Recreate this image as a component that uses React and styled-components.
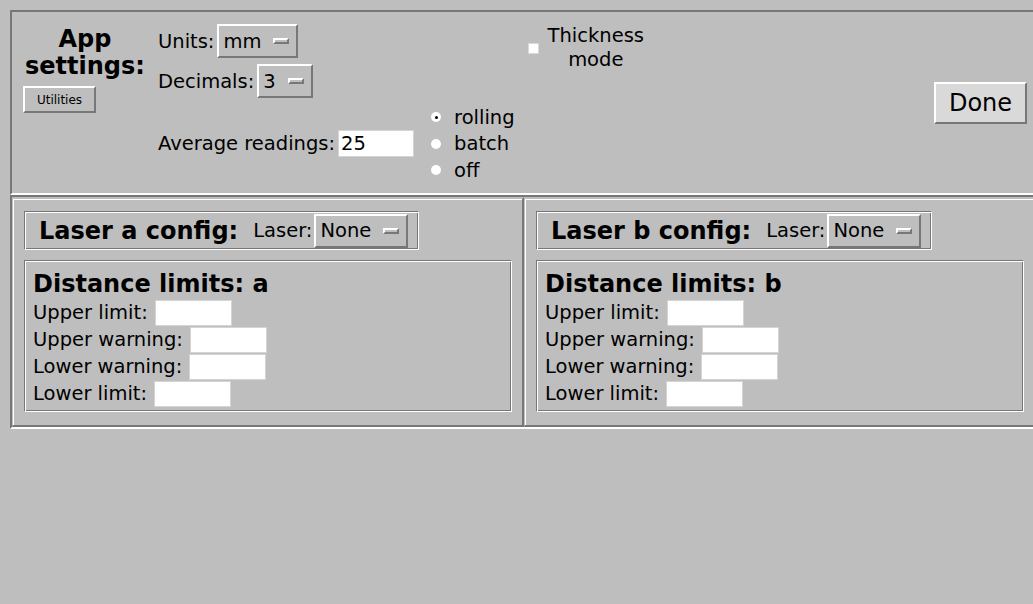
import React from "react";
import styled, { createGlobalStyle, css } from "styled-components";

const C = {
  bg: "#bebebe",
  dark: "#777777",
  light: "#ffffff",
  active: "#d9d9d9",
};

const GlobalStyle = createGlobalStyle`
  html, body {
    margin: 0;
    padding: 0;
    overflow: hidden;
    background: ${C.bg};
  }
  body {
    font-family: "DejaVu Sans", "Liberation Sans", sans-serif;
    color: #000;
  }
`;

/* Tk-style 3D reliefs */
const sunken = css`
  border-style: solid;
  border-width: 2px;
  border-color: ${C.dark} ${C.light} ${C.light} ${C.dark};
`;

const raised = css`
  border-style: solid;
  border-width: 2px;
  border-color: ${C.light} ${C.dark} ${C.dark} ${C.light};
`;

const groove = css`
  border: 1px solid;
  border-color: ${C.dark} ${C.light} ${C.light} ${C.dark};
  box-shadow: inset 1px 1px 0 ${C.light}, inset -1px -1px 0 ${C.dark};
`;

const Window = styled.div`
  width: 1033px;
  height: 604px;
  overflow: hidden;
  box-sizing: border-box;
  padding: 10px 0 0 10px;
  background: ${C.bg};
  font-size: 19.5px;
`;

/* ---------- App settings frame ---------- */

const SettingsFrame = styled.div`
  ${sunken};
  box-sizing: border-box;
  width: 1028px;
  height: 185px;
  display: flex;
  align-items: flex-start;
`;

const TitleColumn = styled.div`
  margin-left: 11px;
  width: 124px;
  padding-top: 14px;
  display: flex;
  flex-direction: column;
  align-items: flex-start;
`;

const Heading = styled.div`
  font-weight: bold;
  font-size: 24px;
  line-height: ${(p) => p.$lh || "27px"};
  white-space: nowrap;
`;

const Title = styled(Heading)`
  align-self: stretch;
  text-align: center;
`;

const SmallButton = styled.button`
  ${raised};
  box-sizing: border-box;
  margin-top: 6px;
  width: 73px;
  height: 27px;
  padding: 0;
  background: ${C.bg};
  font-family: inherit;
  font-size: 12px;
  color: #000;
`;

const FieldColumn = styled.div`
  margin-left: 11px;
  padding-top: 12px;
  display: flex;
  flex-direction: column;
  align-items: flex-start;
`;

const FieldRow = styled.div`
  display: flex;
  align-items: center;
  gap: ${(p) => p.$gap || "3px"};
  height: ${(p) => p.$h || "34px"};
  margin-top: ${(p) => p.$mt || "0"};
  white-space: nowrap;
`;

const OptionBox = styled.div`
  ${raised};
  box-sizing: border-box;
  height: 34px;
  display: flex;
  align-items: center;
  padding: 0 7px 0 4px;
  background: ${C.bg};
`;

const OptionMark = styled.span`
  ${raised};
  box-sizing: border-box;
  margin-left: 12px;
  width: 16px;
  height: 6px;
  background: ${C.bg};
`;

const TextEntry = styled.input`
  box-sizing: border-box;
  width: ${(p) => p.$w || "77px"};
  height: ${(p) => p.$h || "26px"};
  margin: 0;
  padding: 0 2px;
  border: 1px solid #d4d4d4;
  background: #fff;
  font-family: inherit;
  font-size: 19.5px;
  color: #000;
  outline: none;
`;

const RadioColumn = styled.div`
  margin-left: 17px;
  padding-top: 92px;
  display: flex;
  flex-direction: column;
`;

const RadioRow = styled.div`
  display: flex;
  align-items: center;
  height: 26.5px;
  white-space: nowrap;
`;

const RadioDot = styled.span`
  position: relative;
  width: 10px;
  height: 10px;
  border-radius: 50%;
  background: #fff;
  margin-right: 13px;
  flex-shrink: 0;

  &::after {
    content: "";
    position: absolute;
    left: 3.5px;
    top: 3.5px;
    width: 3px;
    height: 3px;
    border-radius: 50%;
    background: #000;
    display: ${(p) => (p.$on ? "block" : "none")};
  }
`;

const CheckColumn = styled.div`
  margin-left: 13px;
  padding-top: 12px;
  display: flex;
  align-items: center;
`;

const CheckBox = styled.span`
  box-sizing: border-box;
  width: 11px;
  height: 11px;
  background: #fff;
  border: 1px solid #d8d8d8;
  margin-right: 9px;
`;

const CheckText = styled.div`
  text-align: center;
  line-height: 24px;
`;

const DoneButton = styled.button`
  ${raised};
  box-sizing: border-box;
  margin-left: auto;
  margin-right: 9px;
  align-self: center;
  width: 93px;
  height: 42px;
  padding: 0;
  background: ${C.active};
  font-family: inherit;
  font-size: 24px;
  color: #000;
`;

/* ---------- Laser panels ---------- */

const LaserArea = styled.div`
  ${sunken};
  box-sizing: border-box;
  width: 1028px;
  height: 234px;
  display: flex;
`;

const LaserPanel = styled.div`
  box-sizing: border-box;
  width: 512px;
  height: 230px;
  flex-shrink: 0;
  border-style: solid;
  border-width: 2px 2px 2px 1px;
  border-color: ${C.bg} ${C.dark} ${C.dark} ${C.bg};
  box-shadow: inset 1px 1px 0 ${C.light};
  padding: 12px 10px 0 11px;
  display: flex;
  flex-direction: column;
  align-items: flex-start;
`;

const ConfigBar = styled.div`
  ${groove};
  box-sizing: border-box;
  height: 39px;
  display: flex;
  align-items: center;
  padding: 0 10px 0 14px;
  white-space: nowrap;
`;

const ConfigLabel = styled.span`
  margin-left: 15px;
  margin-right: 2px;
`;

const LimitsBox = styled.div`
  ${groove};
  box-sizing: border-box;
  align-self: stretch;
  margin-top: 10px;
  padding: 8px 8px 4px 8px;
`;

const LimitRow = styled.div`
  display: flex;
  align-items: center;
  gap: 7px;
  height: 27px;
  white-space: nowrap;
`;

function OptionMenu({ value }) {
  return (
    <OptionBox>
      <span>{value}</span>
      <OptionMark />
    </OptionBox>
  );
}

const LIMITS = ["Upper limit:", "Upper warning:", "Lower warning:", "Lower limit:"];

function LaserConfig({ id }) {
  return (
    <LaserPanel>
      <ConfigBar>
        <Heading $lh="28px">Laser {id} config:</Heading>
        <ConfigLabel>Laser:</ConfigLabel>
        <OptionMenu value="None" />
      </ConfigBar>
      <LimitsBox>
        <Heading $lh="30px">Distance limits: {id}</Heading>
        {LIMITS.map((label) => (
          <LimitRow key={label}>
            <span>{label}</span>
            <TextEntry defaultValue="" />
          </LimitRow>
        ))}
      </LimitsBox>
    </LaserPanel>
  );
}

const MODES = [
  { label: "rolling", on: true },
  { label: "batch", on: false },
  { label: "off", on: false },
];

export default function App() {
  return (
    <>
      <GlobalStyle />
      <Window>
        <SettingsFrame>
          <TitleColumn>
            <Title>
              App
              <br />
              settings:
            </Title>
            <SmallButton>Utilities</SmallButton>
          </TitleColumn>

          <FieldColumn>
            <FieldRow>
              <span>Units:</span>
              <OptionMenu value="mm" />
            </FieldRow>
            <FieldRow $mt="6px">
              <span>Decimals:</span>
              <OptionMenu value="3" />
            </FieldRow>
            <FieldRow $mt="32px" $h="27px">
              <span>Average readings:</span>
              <TextEntry $w="76px" $h="27px" defaultValue="25" />
            </FieldRow>
          </FieldColumn>

          <RadioColumn>
            {MODES.map((m) => (
              <RadioRow key={m.label}>
                <RadioDot $on={m.on} />
                <span>{m.label}</span>
              </RadioRow>
            ))}
          </RadioColumn>

          <CheckColumn>
            <CheckBox />
            <CheckText>
              Thickness
              <br />
              mode
            </CheckText>
          </CheckColumn>

          <DoneButton>Done</DoneButton>
        </SettingsFrame>

        <LaserArea>
          <LaserConfig id="a" />
          <LaserConfig id="b" />
        </LaserArea>
      </Window>
    </>
  );
}
